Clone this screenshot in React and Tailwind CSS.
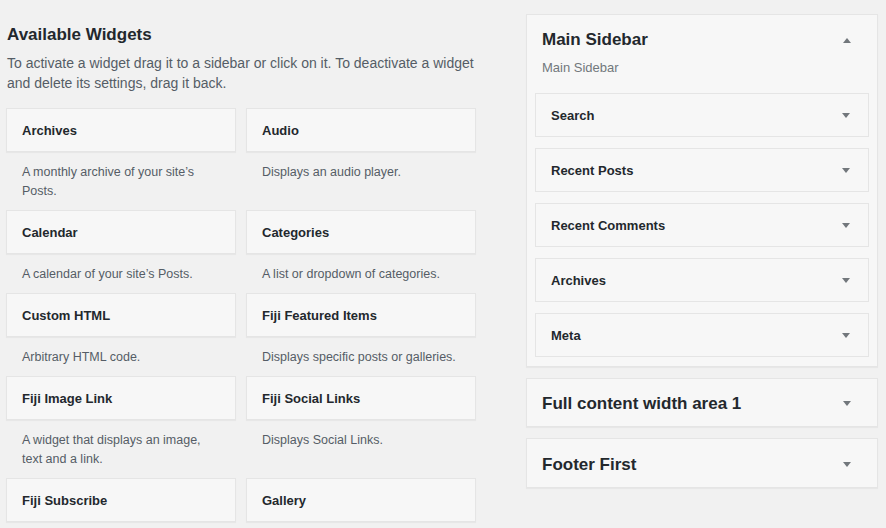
import React from 'react';

const widgets = [
  { name: 'Archives', desc: 'A monthly archive of your site’s Posts.' },
  { name: 'Audio', desc: 'Displays an audio player.' },
  { name: 'Calendar', desc: 'A calendar of your site’s Posts.' },
  { name: 'Categories', desc: 'A list or dropdown of categories.' },
  { name: 'Custom HTML', desc: 'Arbitrary HTML code.' },
  { name: 'Fiji Featured Items', desc: 'Displays specific posts or galleries.' },
  { name: 'Fiji Image Link', desc: 'A widget that displays an image, text and a link.' },
  { name: 'Fiji Social Links', desc: 'Displays Social Links.' },
  { name: 'Fiji Subscribe', desc: '' },
  { name: 'Gallery', desc: '' },
];

const sidebarWidgets = ['Search', 'Recent Posts', 'Recent Comments', 'Archives', 'Meta'];

const Arrow = ({ up }) => (
  <svg width="10" height="6" viewBox="0 0 10 6" className="shrink-0">
    <path d={up ? 'M1 6 L5 1 L9 6 Z' : 'M1 0 L9 0 L5 5 Z'} fill="#72777c" />
  </svg>
);

const WidgetCard = ({ widget }) => (
  <div className="flex flex-col">
    <div className="h-[44px] bg-[#f7f7f7] border border-[#e5e5e5] shadow-[0_1px_1px_rgba(0,0,0,0.04)] px-[15px] pt-px flex items-center text-[13px] font-bold text-[#23282d]">
      {widget.name}
    </div>
    {widget.desc && (
      <p className="pl-[16px] pr-[14px] pt-[11px] pb-[9px] text-[12.5px] leading-[19px] text-[#555d66]">
        {widget.desc}
      </p>
    )}
  </div>
);

const SidebarItem = ({ name }) => (
  <div className="h-[44px] bg-[#f7f7f7] border border-[#e5e5e5] pl-[15px] pr-[17px] pt-px flex items-center justify-between text-[13px] font-bold text-[#23282d]">
    <span>{name}</span>
    <Arrow />
  </div>
);

const App = () => {
  return (
    <div className="w-[886px] h-[528px] overflow-hidden bg-[#f1f1f1] font-['Liberation_Sans',Arial,sans-serif] flex">
      <div className="w-[470px] ml-[6px] shrink-0">
        <h2 className="pl-px pt-[25px] text-[17px] leading-[20px] font-bold text-[#23282d]">Available Widgets</h2>
        <p className="pl-px mt-[8px] text-[14px] leading-[20px] text-[#555d66]">
          To activate a widget drag it to a sidebar or click on it. To deactivate a widget and delete its settings, drag it back.
        </p>
        <div className="mt-[15px] grid grid-cols-2 gap-x-[10px]">
          {widgets.map((w) => (
            <WidgetCard key={w.name} widget={w} />
          ))}
        </div>
      </div>

      <div className="ml-[50px] w-[352px] pt-[14px] flex flex-col gap-[11px]">
        <div className="bg-[#f7f7f7] border border-[#e5e5e5] shadow-[0_1px_1px_rgba(0,0,0,0.04)] px-[8px] pb-[9px]">
          <div className="flex items-center justify-between pl-[7px] pr-[17px] pt-[15px]">
            <h3 className="text-[17px] leading-[20px] font-bold text-[#23282d]">Main Sidebar</h3>
            <Arrow up />
          </div>
          <p className="pl-[7px] mt-[8px] text-[13px] leading-[20px] text-[#72777c]">Main Sidebar</p>
          <div className="mt-[15px] flex flex-col gap-[11px]">
            {sidebarWidgets.map((n) => (
              <SidebarItem key={n} name={n} />
            ))}
          </div>
        </div>
        <div className="h-[49px] bg-[#f7f7f7] border border-[#e5e5e5] shadow-[0_1px_1px_rgba(0,0,0,0.04)] pl-[15px] pr-[25px] pt-[3px] flex items-center justify-between">
          <h3 className="text-[17px] leading-[20px] font-bold text-[#23282d]">Full content width area 1</h3>
          <Arrow />
        </div>
        <div className="h-[50px] bg-[#f7f7f7] border border-[#e5e5e5] shadow-[0_1px_1px_rgba(0,0,0,0.04)] pl-[15px] pr-[25px] pt-[3px] flex items-center justify-between">
          <h3 className="text-[17px] leading-[20px] font-bold text-[#23282d]">Footer First</h3>
          <Arrow />
        </div>
      </div>
    </div>
  );
};

export default App;
